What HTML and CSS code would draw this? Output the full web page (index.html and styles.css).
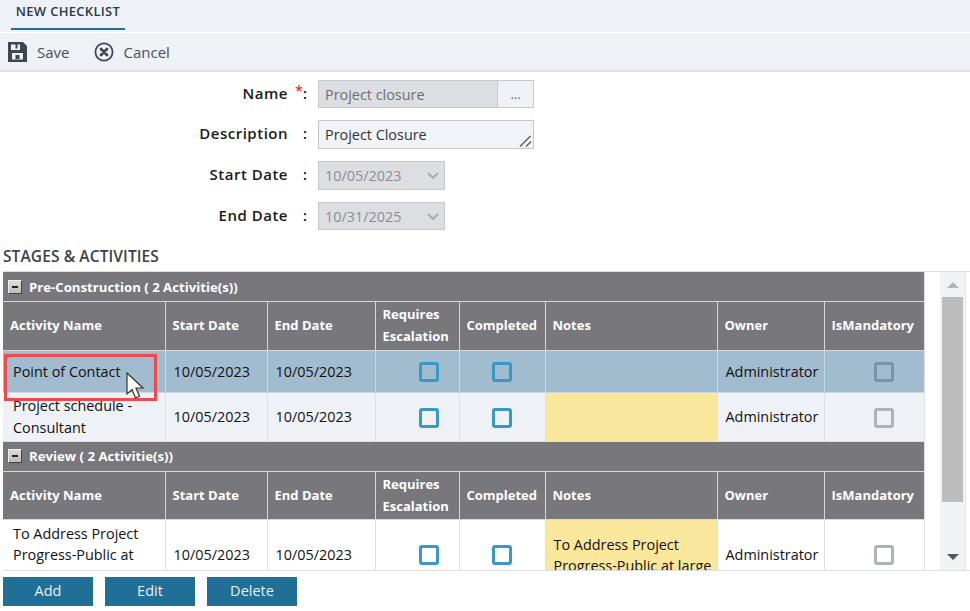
FILE: index.html
```html
<!DOCTYPE html>
<html lang="en">
<head>
  <meta charset="UTF-8">
  <meta name="viewport" content="width=device-width, initial-scale=1.0">
  <title>New Checklist</title>
  <link rel="stylesheet" href="styles.css">
</head>
<body>
  <div class="tabbar"><span class="tab">NEW CHECKLIST</span></div>
  <div class="toolbar">
    <a class="tool">
      <svg width="20" height="20" viewBox="0 0 20 20"><path fill="#3f4650" fill-rule="evenodd" d="M0 0H15L19 4V20H0ZM3 2.5V8H12V2.5H9.5V6.5H7.5V2.5ZM4 11V17.5H15V11ZM7.5 13H11.5V17H7.5Z"/></svg>
      Save
    </a>
    <a class="tool">
      <svg width="20" height="20" viewBox="0 0 20 20"><circle cx="10" cy="10" r="8.6" fill="none" stroke="#3f4650" stroke-width="1.8"/><path d="M7 7L13 13M13 7L7 13" stroke="#3f4650" stroke-width="2.8" stroke-linecap="round"/></svg>
      Cancel
    </a>
  </div>

  <div class="form">
    <label>Name</label><span class="colon"><i>*</i>:</span>
    <div class="namebox"><span class="field grey">Project closure</span><span class="dots">...</span></div>

    <label>Description</label><span class="colon">:</span>
    <div class="field desc">Project Closure
      <svg class="grip" width="13" height="12" viewBox="0 0 13 12"><path d="M1 11.5L11.5 1M7 11.5L12 6.5" stroke="#555" stroke-width="1.2" fill="none"/></svg>
    </div>

    <label>Start Date</label><span class="colon">:</span>
    <div class="field date">10/05/2023<svg width="12" height="7" viewBox="0 0 12 7"><path d="M1 1L6 6L11 1" stroke="#a9adb2" stroke-width="2" fill="none"/></svg></div>

    <label>End Date</label><span class="colon">:</span>
    <div class="field date">10/31/2025<svg width="12" height="7" viewBox="0 0 12 7"><path d="M1 1L6 6L11 1" stroke="#a9adb2" stroke-width="2" fill="none"/></svg></div>
  </div>

  <h3 class="section">STAGES &amp; ACTIVITIES</h3>

  <div class="gridwrap">
    <div class="gridscroll">
      <table class="grid">
        <colgroup>
          <col class="c1"><col class="c2"><col class="c3"><col class="c4"><col class="c5"><col class="c6"><col class="c7"><col class="c8">
        </colgroup>
        <tr class="group first"><td colspan="8"><span class="minus"></span>Pre-Construction ( 2 Activitie(s))</td></tr>
        <tr class="head first">
          <th>Activity Name</th><th>Start Date</th><th>End Date</th><th>Requires Escalation</th><th>Completed</th><th>Notes</th><th>Owner</th><th>IsMandatory</th>
        </tr>
        <tr class="row selected">
          <td class="name">Point of Contact</td><td class="date-cell">10/05/2023</td><td class="date-cell">10/05/2023</td>
          <td class="chk esc"><span class="box"></span></td><td class="chk"><span class="box"></span></td>
          <td></td><td class="owner">Administrator</td><td class="chk mand"><span class="box off"></span></td>
        </tr>
        <tr class="row alt">
          <td class="name">Project schedule - Consultant</td><td class="date-cell">10/05/2023</td><td class="date-cell">10/05/2023</td>
          <td class="chk esc"><span class="box"></span></td><td class="chk"><span class="box"></span></td>
          <td class="note"></td><td class="owner">Administrator</td><td class="chk mand"><span class="box off"></span></td>
        </tr>
        <tr class="group"><td colspan="8"><span class="minus"></span>Review ( 2 Activitie(s))</td></tr>
        <tr class="head">
          <th>Activity Name</th><th>Start Date</th><th>End Date</th><th>Requires Escalation</th><th>Completed</th><th>Notes</th><th>Owner</th><th>IsMandatory</th>
        </tr>
        <tr class="row tall">
          <td class="name">To Address Project Progress-Public at large</td><td class="date-cell">10/05/2023</td><td class="date-cell">10/05/2023</td>
          <td class="chk esc"><span class="box"></span></td><td class="chk"><span class="box"></span></td>
          <td class="note">To Address Project Progress-Public at large</td><td class="owner">Administrator</td><td class="chk mand"><span class="box off"></span></td>
        </tr>
      </table>
    </div>
    <div class="scrollbar">
      <span class="arrow up"></span>
      <span class="thumb"></span>
      <span class="arrow down"></span>
    </div>
    <!-- red box and cursor sit over the grid -->
    <div class="callout"></div>
    <svg class="cursor" width="22" height="28" viewBox="0 0 22 28"><path d="M1 1V22L6 17.5L9.5 26L13.5 24.3L10 16H17Z" fill="#fff" stroke="#333" stroke-width="1.2"/></svg>
  </div>

  <div class="buttons">
    <button>Add</button><button>Edit</button><button>Delete</button>
  </div>
</body>
</html>
```

FILE: styles.css
```css
*{margin:0;padding:0;box-sizing:border-box;}
body{font-family:"Open Sans","Noto Sans",sans-serif;font-size:14.4px;color:#111;background:#fff;overflow:hidden;}

.tabbar{height:33px;background:#eef1f5;border-bottom:1px solid #fff;padding-left:11px;}
.tab{display:inline-block;height:30px;width:114px;text-align:center;font-size:13px;letter-spacing:.3px;font-weight:600;line-height:23px;color:#2b3a4a;border-bottom:2px solid #1f6f96;}

.toolbar{height:39px;background:#eef1f5;border-bottom:2px solid #dde1e6;display:flex;align-items:center;gap:25px;padding-left:8px;}
.tool{display:flex;align-items:center;gap:9px;color:#4a4f57;font-size:15px;}

.form{display:grid;grid-template-columns:288px 30px 216px;grid-template-rows:28px 29px 29px 28px;row-gap:12px;margin-top:8px;}
.form label{font-weight:600;font-size:15px;letter-spacing:.5px;text-align:right;line-height:26px;color:#1a1a1a;}
.colon{font-weight:600;line-height:27px;padding-left:15px;position:relative;}
.colon i{position:absolute;left:7px;top:-3px;color:#f00;font-style:normal;font-weight:400;}

.field{border:1px solid #c4c9cf;color:#555;padding-left:6px;line-height:27px;}
.grey{background:#dcdee1;color:#6c7075;flex:1;}
.namebox{display:flex;}
.dots{width:36px;background:#eef2f6;border:1px solid #c4c9cf;border-left:none;text-align:center;font-size:13px;color:#666;line-height:27px;}
.desc{background:#f0f4f8;color:#333;position:relative;}
.grip{position:absolute;right:1px;bottom:1px;}
.date{width:127px;background:#dcdee1;color:#8b8f94;display:flex;justify-content:space-between;align-items:center;padding-right:5px;}

.section{font-size:15.5px;letter-spacing:.1px;font-weight:600;color:#3d4248;line-height:20px;margin:16px 0 5px 3px;}

.gridwrap{display:flex;position:relative;height:300px;margin-left:3px;border-top:1px solid #dcdfe3;border-bottom:1px solid #dcdfe3;}
.gridscroll{width:922px;height:298px;overflow:hidden;border-right:1px solid #dcdfe3;}
.grid{width:921px;table-layout:fixed;border-collapse:collapse;}
.c1{width:162px;}.c2{width:102px;}.c3{width:108px;}.c4{width:84px;}.c5{width:86px;}.c6{width:172px;}.c7{width:107px;}.c8{width:100px;}

.group td{height:30px;background:#77777c;color:#fff;font-weight:700;font-size:13.2px;border-bottom:1px solid #d5d7da;padding-left:5px;}
.group.first td{height:29px;padding-top:1px;}
.minus{display:inline-block;width:14px;height:14px;background:linear-gradient(#dcdcdc,#bcbcbc);border:1px solid;border-color:#eee #444 #444 #eee;margin-right:7px;vertical-align:-2px;position:relative;}
.minus:after{content:"";position:absolute;left:3px;right:3px;top:5px;height:2px;background:#222;}

.head th{height:48px;background:#77777c;color:#fff;font-size:13px;font-weight:700;text-align:left;line-height:22px;padding:0 5px 0 7px;border-left:1px solid #d5d7da;border-bottom:1px solid #d5d7da;}
.head.first th{height:49px;padding-bottom:2px;}
.head th:first-child{border-left:none;}

.row td{border-left:1px solid #dcdfe3;border-bottom:1px solid #dcdfe3;line-height:22px;color:#111;overflow:hidden;}
.row td:first-child{border-left:none;}
.row.selected td{height:42px;padding-top:1px;background:#a1bccf;border-color:#cdd9e2;}
.row.selected td.chk{padding-top:0;}
.row.alt td{height:49px;background:#eef2f6;}
.row.tall td{height:70px;background:#fff;vertical-align:top;padding-top:3px;line-height:21px;}

td.name{padding:0 6px 0 10px;}
td.date-cell{padding-left:8px;}
td.owner{padding-left:8px;}
.row td.note{background:#f9e79b;padding:14px 2px 0 8px;}
td.chk{text-align:center;}
td.esc{padding-left:24px;}
td.mand{padding-left:20px;}
.box{display:inline-block;width:20px;height:20px;border:3px solid #3a98c6;border-radius:3px;vertical-align:middle;}
.box.off{border-color:#adb3ba;}
.selected .box.off{border-color:#7c92a8;}
.tall .box{margin-top:22px;}
.row.tall td.owner,.row.tall td.date-cell{padding-top:24px;}

.scrollbar{width:26px;margin-left:15px;background:#f1f2f4;border-right:1px solid #e4e6e8;display:flex;flex-direction:column;align-items:center;justify-content:space-between;position:relative;}
.thumb{width:21px;height:205px;background:#bcbcbc;position:absolute;top:25px;left:2px;}
.arrow{width:0;height:0;border-left:6px solid transparent;border-right:6px solid transparent;margin:10px 0;}
.arrow.up{border-bottom:6px solid #b5b5b5;}
.arrow.down{border-top:6px solid #555;}

.callout{position:absolute;left:1px;top:82px;width:153px;height:47px;border:3px solid #ee4a50;}
.cursor{position:absolute;left:123px;top:100px;}

.buttons{display:flex;gap:12px;margin:6px 0 0 3px;}
.buttons button{width:90px;height:29px;padding-bottom:2px;background:#1f6f96;border:none;color:#e8eef2;font-family:"Open Sans","Noto Sans",sans-serif;font-size:14.5px;font-weight:500;}
```
